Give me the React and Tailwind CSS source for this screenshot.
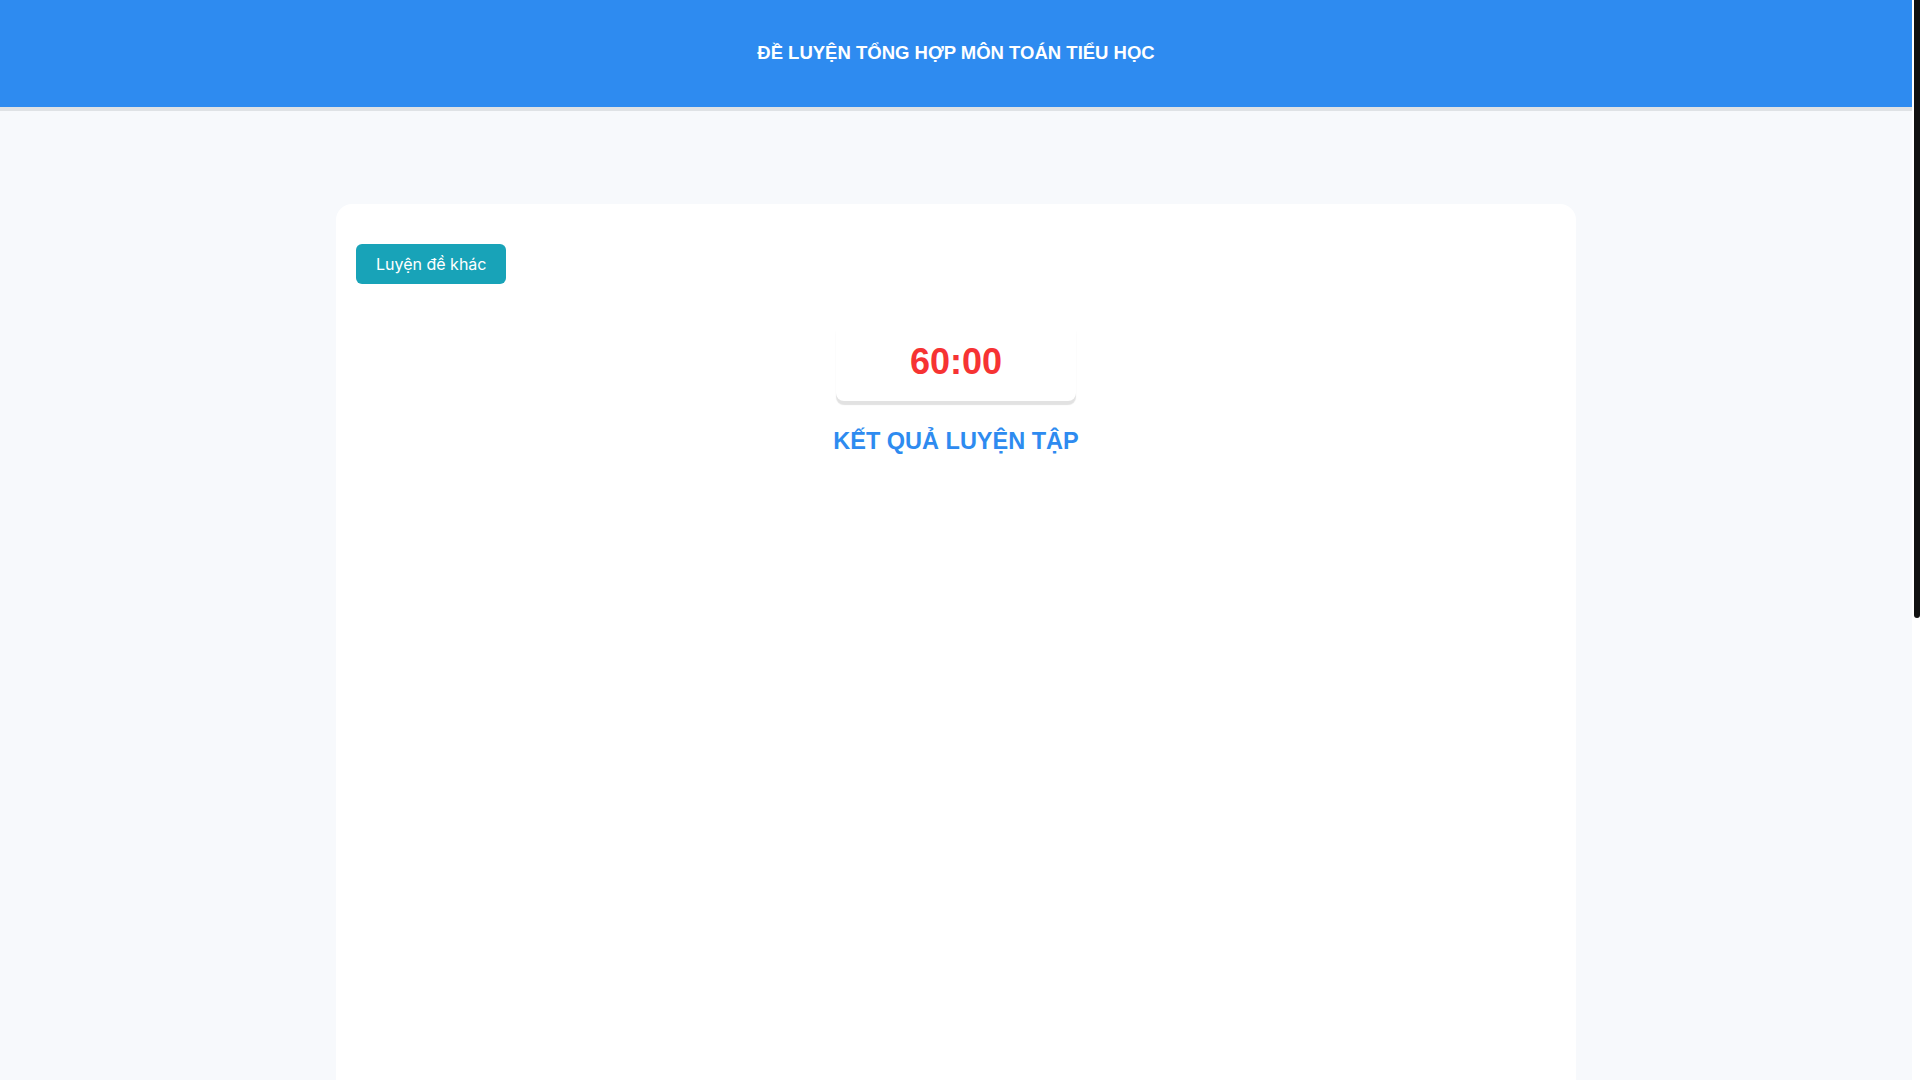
export default function App() {
  return (
    <div
      className="flex h-screen overflow-hidden bg-white"
      style={{ fontFamily: '"Liberation Sans", Arial, sans-serif' }}
    >
      <div className="flex-1 min-w-0">
        <header className="h-[111px] bg-[#2e8bf0] border-b-4 border-[#dfe2e5] flex items-center justify-center">
          <h1 className="text-[18.5px] font-bold text-white uppercase leading-none">
            ĐỀ LUYỆN TỔNG HỢP MÔN TOÁN TIỂU HỌC
          </h1>
        </header>

        <main className="bg-[#f7f9fc] pt-[93px] pb-10">
          <div className="mx-auto w-[1240px] min-h-[1643px] bg-white rounded-2xl px-5 pt-10">
            <button
              className="h-10 px-5 rounded-md bg-[#18a3b8] text-white text-[16px]"
              style={{ fontFamily: 'Inter, "Noto Sans", sans-serif' }}
            >
              Luyện đề khác
            </button>

            <div className="flex flex-col items-center mt-[38px]">
              <div className="w-[240px] rounded-lg bg-white shadow-[0_4px_1px_#e2e2e2] pt-[20px] pb-[19px] text-center">
                <span className="text-[36px] font-bold text-[#f63333] leading-10">60:00</span>
              </div>
              <h2 className="mt-[24px] text-[23.5px] font-bold text-[#2e8bf0] leading-8 uppercase">
                KẾT QUẢ LUYỆN TẬP
              </h2>
            </div>
          </div>
        </main>
      </div>

      {/* scrollbar */}
      <div className="w-2 shrink-0 bg-white pl-0.5">
        <div className="h-[618px] bg-[#111] rounded-b-sm" />
      </div>
    </div>
  )
}
